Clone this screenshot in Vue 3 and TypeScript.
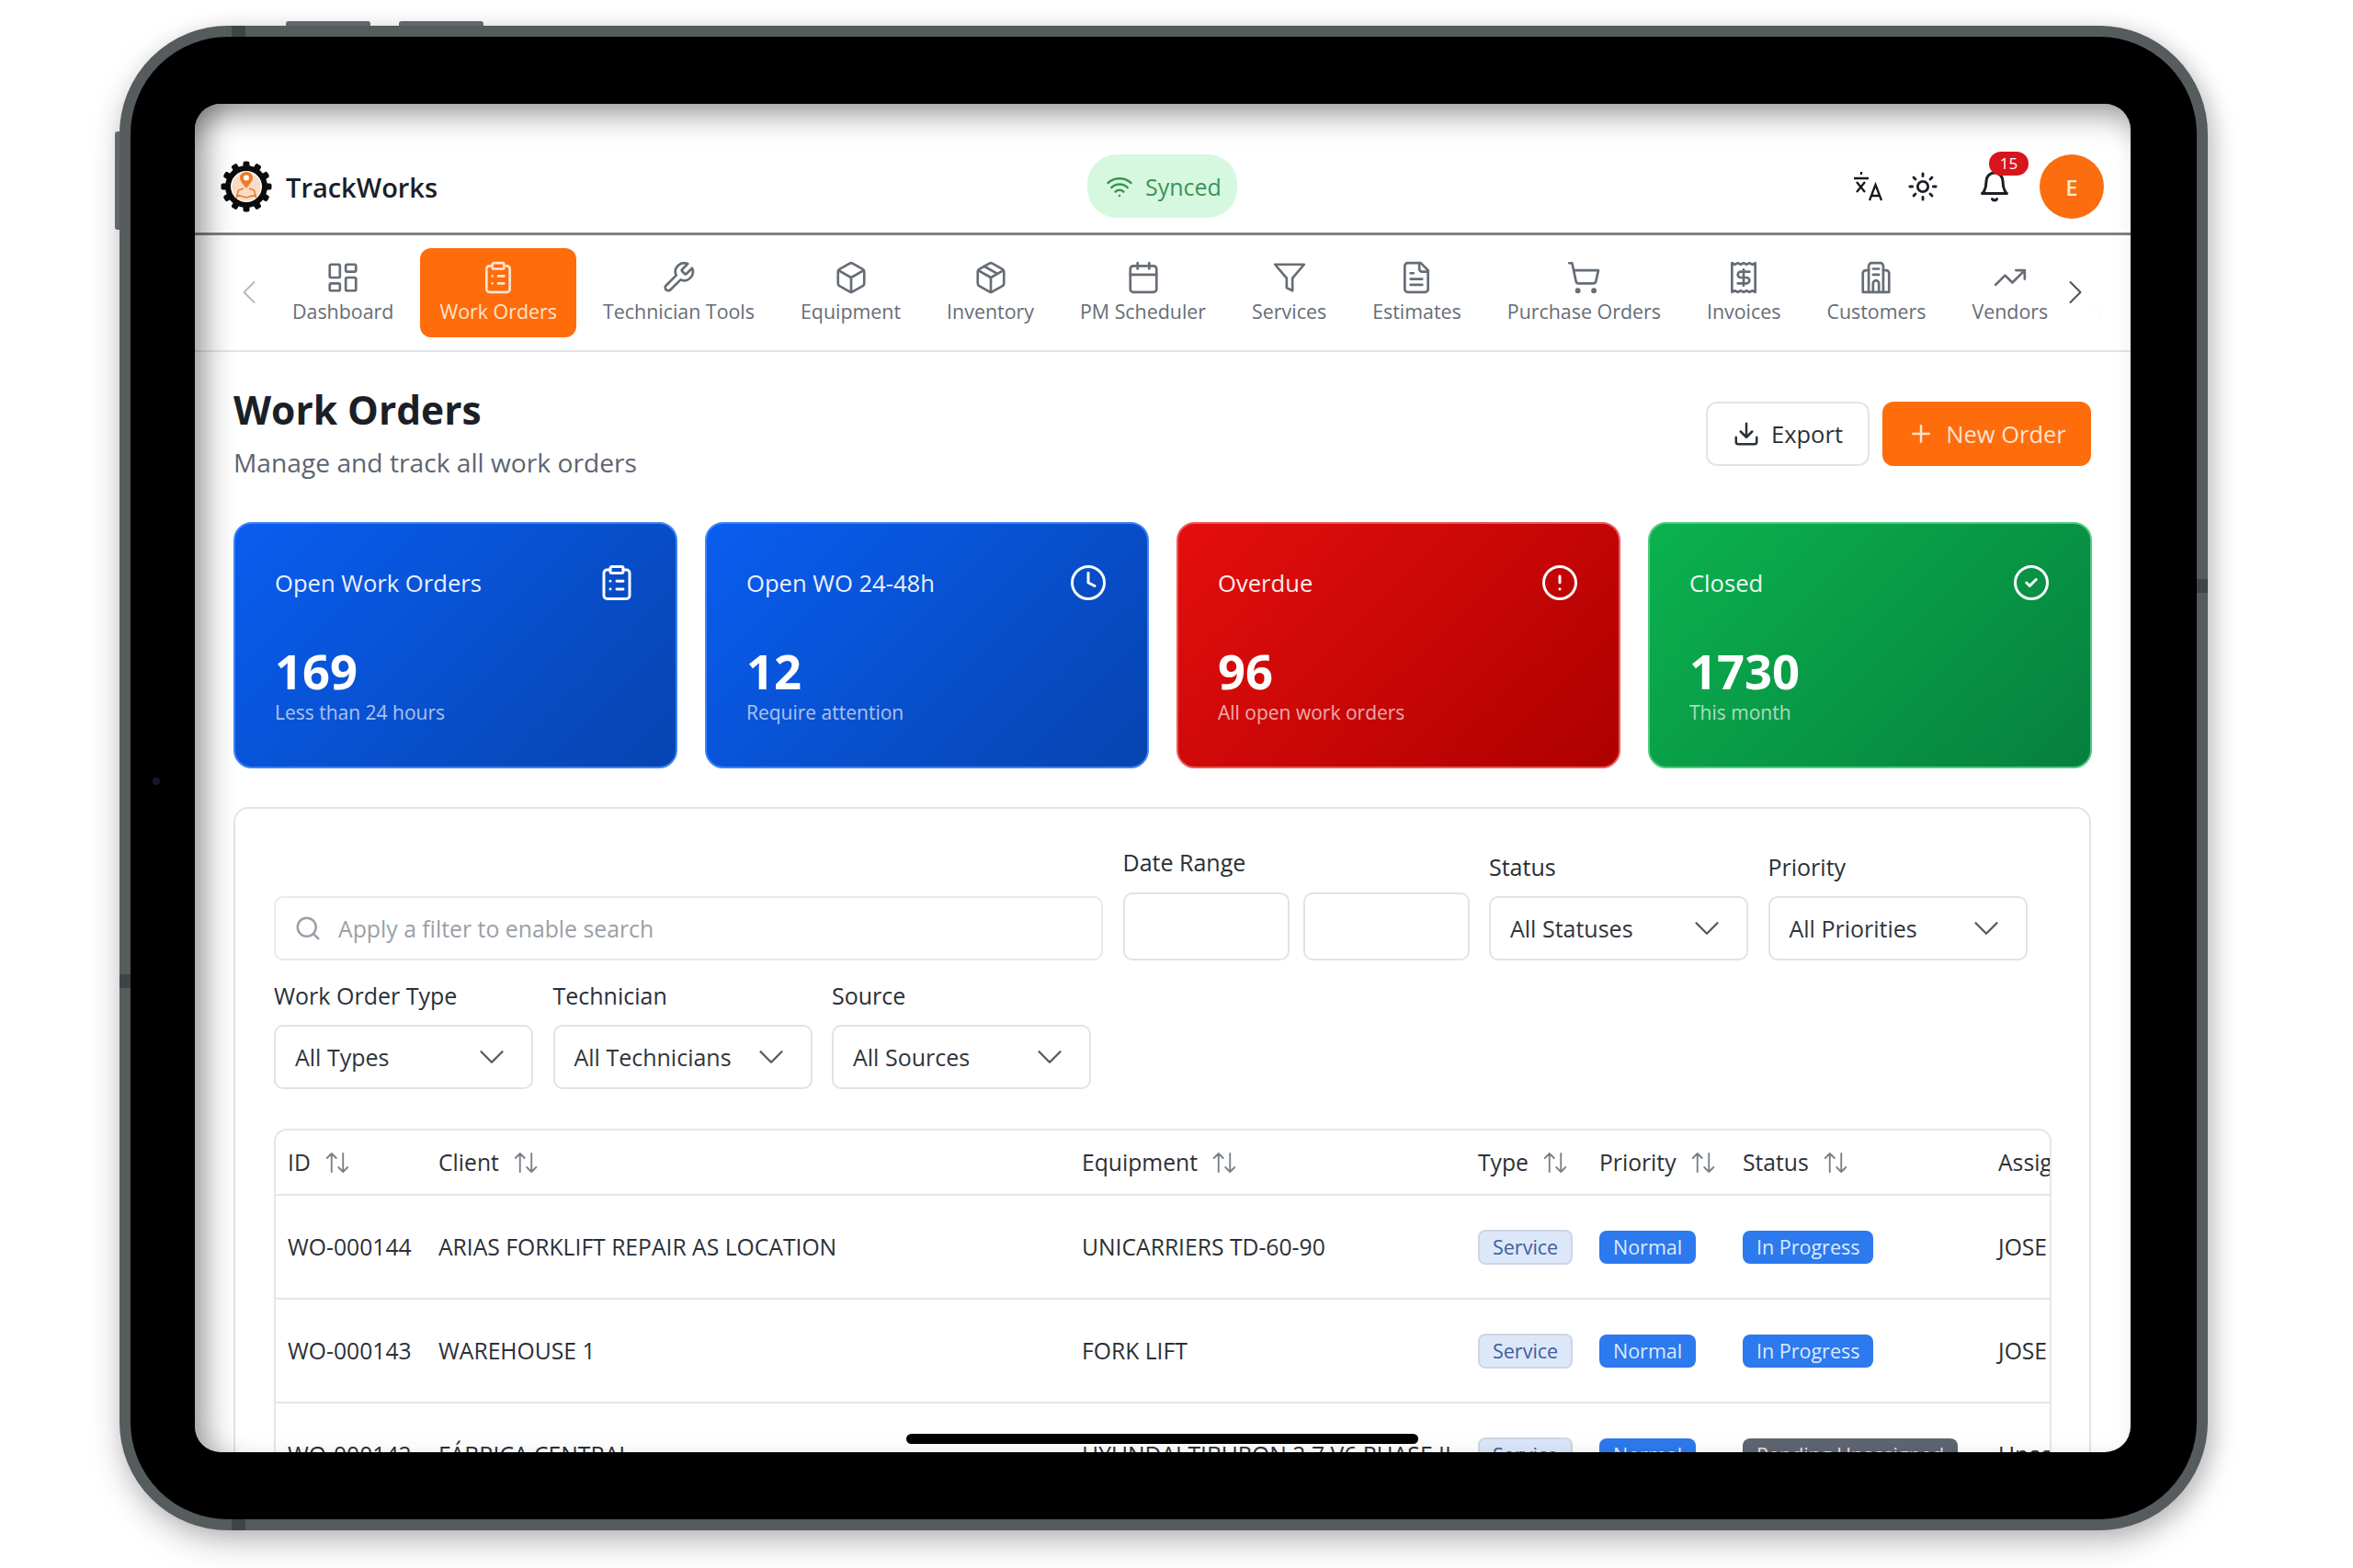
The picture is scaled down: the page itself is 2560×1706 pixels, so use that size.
<template>
  <div class="stage">
    <div class="tablet">
      <span class="side-btn top-a"></span>
      <span class="side-btn top-b"></span>
      <span class="side-btn left-a"></span>
      <span class="tick tick-top"></span>
      <span class="tick tick-bottom"></span>
      <span class="tick tick-left"></span>
      <span class="tick tick-right"></span>
      <span class="camera"></span>

      <div class="screen">
        <header class="topbar">
          <div class="brand">
            <svg class="logo" viewBox="0 0 56 56">
              <g fill="#0b0b0b">
                <rect
                  v-for="deg in teeth"
                  :key="deg"
                  x="24.5"
                  y="0.5"
                  width="7"
                  height="10"
                  rx="2"
                  :transform="`rotate(${deg} 28 28)`"
                />
                <circle cx="28" cy="28" r="23" />
              </g>
              <circle cx="28" cy="28" r="17" fill="#fff" />
              <circle cx="28" cy="28" r="15.500" fill="#f8dcc6" />
              <path d="M28 12c-4.200 0-7 3-7 6.600 0 4 4.600 8.400 7 11.400 2.400-3 7-7.400 7-11.400 0-3.600-2.800-6.600-7-6.600z" fill="#ee7b30" />
              <circle cx="28" cy="18.500" r="3" fill="#fff" />
              <path d="M17 41l2.500-9 5.500-2M39 41l-2.500-9-5.500-2M18 37l10 3 10-3" fill="none" stroke="#ee7b30" stroke-width="1.600" />
            </svg>
            <span class="brand-name">TrackWorks</span>
          </div>

          <div class="synced">
            <svg class="ico synced-ico" viewBox="0 0 24 24" v-html="icons.wifi"></svg>
            <span>Synced</span>
          </div>

          <div class="actions">
            <svg class="lang" viewBox="0 0 34 32">
              <path d="M10 0v3M2 7h16M5 11l9 11M14 11l-9 11M19 31l6.500-17L32 31M21 26h9" />
            </svg>
            <svg class="ico sun" viewBox="0 0 24 24" v-html="icons.sun"></svg>
            <div class="bell">
              <svg class="ico" viewBox="0 0 24 24" v-html="icons.bell"></svg>
              <span class="badge-count">15</span>
            </div>
            <div class="avatar">E</div>
          </div>
        </header>

        <nav class="nav">
          <div class="nav-track">
            <div
              v-for="item in navItems"
              :key="item.label"
              :class="['nav-item', { active: item.label === 'Work Orders' }]"
            >
              <svg class="ico nav-ico" viewBox="0 0 24 24" v-html="icons[item.icon]"></svg>
              <span>{{ item.label }}</span>
            </div>
          </div>
          <span class="nav-fade"></span>
          <svg class="ico nav-prev" viewBox="0 0 24 24"><path d="m15 18-6-6 6-6" /></svg>
          <svg class="ico nav-next" viewBox="0 0 24 24"><path d="m9 18 6-6-6-6" /></svg>
        </nav>

        <main class="page">
          <div class="page-head">
            <div>
              <h1>Work Orders</h1>
              <p>Manage and track all work orders</p>
            </div>
            <div class="head-actions">
              <button class="btn-export">
                <svg class="ico" viewBox="0 0 24 24" v-html="icons.download"></svg>
                Export
              </button>
              <button class="btn-new">
                <svg class="ico" viewBox="0 0 24 24"><path d="M5 12h14M12 5v14" /></svg>
                New Order
              </button>
            </div>
          </div>

          <section class="cards">
            <div v-for="card in cards" :key="card.title" :class="['card', card.tone]">
              <div class="card-top">
                <span class="card-title">{{ card.title }}</span>
                <svg class="ico card-ico" viewBox="0 0 24 24" v-html="icons[card.icon]"></svg>
              </div>
              <div class="card-value">{{ card.value }}</div>
              <div class="card-sub">{{ card.sub }}</div>
            </div>
          </section>

          <section class="panel">
            <div class="filter-row first">
              <div class="search">
                <svg class="ico" viewBox="0 0 24 24" v-html="icons.search"></svg>
                <span>Apply a filter to enable search</span>
              </div>
              <div class="field date-field">
                <label>Date Range</label>
                <div class="dates">
                  <div class="date-box"></div>
                  <div class="date-box"></div>
                </div>
              </div>
              <div v-for="f in topFilters" :key="f.label" class="field">
                <label>{{ f.label }}</label>
                <div class="select">
                  <span>{{ f.value }}</span>
                  <svg class="ico" viewBox="0 0 24 24"><path d="m6 9 6 6 6-6" /></svg>
                </div>
              </div>
            </div>

            <div class="filter-row">
              <div v-for="f in bottomFilters" :key="f.label" class="field">
                <label>{{ f.label }}</label>
                <div class="select">
                  <span>{{ f.value }}</span>
                  <svg class="ico" viewBox="0 0 24 24"><path d="m6 9 6 6 6-6" /></svg>
                </div>
              </div>
            </div>

            <div class="table-wrap">
              <table>
                <colgroup>
                  <col v-for="w in colWidths" :key="w" :style="{ width: w + 'px' }" />
                </colgroup>
                <thead>
                  <tr>
                    <th v-for="col in columns" :key="col">
                      <span class="th-inner">
                        {{ col }}
                        <svg class="ico sort" viewBox="0 0 24 24" v-html="icons.sort"></svg>
                      </span>
                    </th>
                    <th>Assigned</th>
                  </tr>
                </thead>
                <tbody>
                  <tr v-for="row in rows" :key="row.id">
                    <td>{{ row.id }}</td>
                    <td>{{ row.client }}</td>
                    <td>{{ row.equipment }}</td>
                    <td><span class="pill service">Service</span></td>
                    <td><span class="pill normal">Normal</span></td>
                    <td>
                      <span :class="['pill', row.status === 'In Progress' ? 'progress' : 'pending']">{{ row.status }}</span>
                    </td>
                    <td>{{ row.assigned }}</td>
                  </tr>
                </tbody>
              </table>
            </div>
          </section>
        </main>

        <span class="home-bar"></span>
        <span class="screen-shade"></span>
      </div>
    </div>
  </div>
</template>

<script setup lang="ts">
const icons: Record<string, string> = {
  dashboard:
    '<rect x="3" y="3" width="7" height="9" rx="1"/><rect x="14" y="3" width="7" height="5" rx="1"/><rect x="14" y="12" width="7" height="9" rx="1"/><rect x="3" y="16" width="7" height="5" rx="1"/>',
  clipboard:
    '<rect x="8" y="2" width="8" height="4" rx="1"/><path d="M16 4h2a2 2 0 0 1 2 2v14a2 2 0 0 1-2 2H6a2 2 0 0 1-2-2V6a2 2 0 0 1 2-2h2"/><path d="M12 11h4M12 16h4M8 11h.01M8 16h.01"/>',
  wrench:
    '<path d="M14.7 6.300a1 1 0 0 0 0 1.400l1.600 1.600a1 1 0 0 0 1.400 0l3.770-3.770a6 6 0 0 1-7.940 7.940l-6.910 6.910a2.120 2.120 0 0 1-3-3l6.910-6.910a6 6 0 0 1 7.940-7.940l-3.760 3.760z"/>',
  box:
    '<path d="M21 8a2 2 0 0 0-1-1.730l-7-4a2 2 0 0 0-2 0l-7 4A2 2 0 0 0 3 8v8a2 2 0 0 0 1 1.730l7 4a2 2 0 0 0 2 0l7-4A2 2 0 0 0 21 16Z"/><path d="m3.300 7 8.700 5 8.700-5M12 22V12"/>',
  pkg:
    '<path d="M21 8a2 2 0 0 0-1-1.730l-7-4a2 2 0 0 0-2 0l-7 4A2 2 0 0 0 3 8v8a2 2 0 0 0 1 1.730l7 4a2 2 0 0 0 2 0l7-4A2 2 0 0 0 21 16Z"/><path d="m3.300 7 8.700 5 8.700-5M12 22V12M7.500 4.270l9 5.150"/>',
  calendar:
    '<path d="M8 2v4M16 2v4M3 10h18"/><rect x="3" y="4" width="18" height="18" rx="2"/>',
  funnel: '<polygon points="22 3 2 3 10 12.460 10 19 14 21 14 12.460 22 3"/>',
  file:
    '<path d="M15 2H6a2 2 0 0 0-2 2v16a2 2 0 0 0 2 2h12a2 2 0 0 0 2-2V7Z"/><path d="M14 2v4a2 2 0 0 0 2 2h4M10 9H8M16 13H8M16 17H8"/>',
  cart:
    '<circle cx="8" cy="21" r="1"/><circle cx="19" cy="21" r="1"/><path d="M2.050 2.050h2l2.660 12.420a2 2 0 0 0 2 1.580h9.780a2 2 0 0 0 1.950-1.570l1.650-7.430H5.120"/>',
  receipt:
    '<path d="M4 2v20l2-1 2 1 2-1 2 1 2-1 2 1 2-1 2 1V2l-2 1-2-1-2 1-2-1-2 1-2-1-2 1Z"/><path d="M16 8h-6a2 2 0 1 0 0 4h4a2 2 0 1 1 0 4H8M12 17.500v-11"/>',
  building:
    '<path d="M3 22V9a2 2 0 0 1 2-2h2V4a2 2 0 0 1 2-2h6a2 2 0 0 1 2 2v3h2a2 2 0 0 1 2 2v13Z"/><path d="M7 7v15M17 7v15M10 6h4M10 10h4M10 22v-6a2 2 0 0 1 4 0v6"/>',
  trend: '<path d="M22 7l-8.500 8.500-5-5L2 17M16 7h6v6"/>',
  team: '<circle cx="12" cy="8" r="4"/><path d="M4 21a8 8 0 0 1 16 0"/>',
  wifi:
    '<path d="M12 20h.01M2 8.820a15 15 0 0 1 20 0M5 12.860a10 10 0 0 1 14 0M8.500 16.430a5 5 0 0 1 7 0"/>',
  sun:
    '<circle cx="12" cy="12" r="4"/><path d="M12 2v2M12 20v2M4.930 4.930l1.410 1.410M17.660 17.660l1.410 1.410M2 12h2M20 12h2M6.340 17.660l-1.410 1.410M19.070 4.930l-1.410 1.410"/>',
  bell:
    '<path d="M6 8a6 6 0 0 1 12 0c0 7 3 9 3 9H3s3-2 3-9"/><path d="M10.300 21a1.940 1.940 0 0 0 3.400 0"/>',
  download:
    '<path d="M21 15v4a2 2 0 0 1-2 2H5a2 2 0 0 1-2-2v-4M7 10l5 5 5-5M12 15V3"/>',
  clock: '<circle cx="12" cy="12" r="10"/><path d="M12 6v6l4 2"/>',
  alert: '<circle cx="12" cy="12" r="10"/><path d="M12 8v4M12 16h.01"/>',
  check: '<circle cx="12" cy="12" r="10"/><path d="m9 12 2 2 4-4"/>',
  search: '<circle cx="11" cy="11" r="8"/><path d="m21 21-4.300-4.300"/>',
  sort: '<path d="m21 16-4 4-4-4M17 20V4M3 8l4-4 4 4M7 4v16"/>',
};

const teeth = [0, 30, 60, 90, 120, 150, 180, 210, 240, 270, 300, 330];

const navItems = [
  { label: "Dashboard", icon: "dashboard" },
  { label: "Work Orders", icon: "clipboard" },
  { label: "Technician Tools", icon: "wrench" },
  { label: "Equipment", icon: "box" },
  { label: "Inventory", icon: "pkg" },
  { label: "PM Scheduler", icon: "calendar" },
  { label: "Services", icon: "funnel" },
  { label: "Estimates", icon: "file" },
  { label: "Purchase Orders", icon: "cart" },
  { label: "Invoices", icon: "receipt" },
  { label: "Customers", icon: "building" },
  { label: "Vendors", icon: "trend" },
  { label: "Team", icon: "team" },
];

const cards = [
  { title: "Open Work Orders", value: "169", sub: "Less than 24 hours", icon: "clipboard", tone: "blue" },
  { title: "Open WO 24-48h", value: "12", sub: "Require attention", icon: "clock", tone: "blue" },
  { title: "Overdue", value: "96", sub: "All open work orders", icon: "alert", tone: "red" },
  { title: "Closed", value: "1730", sub: "This month", icon: "check", tone: "green" },
];

const topFilters = [
  { label: "Status", value: "All Statuses" },
  { label: "Priority", value: "All Priorities" },
];

const bottomFilters = [
  { label: "Work Order Type", value: "All Types" },
  { label: "Technician", value: "All Technicians" },
  { label: "Source", value: "All Sources" },
];

const columns = ["ID", "Client", "Equipment", "Type", "Priority", "Status"];
const colWidths = [164, 700, 431, 132, 156, 278, 200];

const rows = [
  { id: "WO-000144", client: "ARIAS FORKLIFT REPAIR AS LOCATION", equipment: "UNICARRIERS TD-60-90", status: "In Progress", assigned: "JOSE" },
  { id: "WO-000143", client: "WAREHOUSE 1", equipment: "FORK LIFT", status: "In Progress", assigned: "JOSE" },
  { id: "WO-000142", client: "FÁBRICA CENTRAL", equipment: "HYUNDAI TIBURON 2.7 V6 PHASE II", status: "Pending Unassigned", assigned: "Unassigned" },
];
</script>

<style>
body {
  background: #fff;
}
</style>

<style scoped>
.stage {
  width: 2560px;
  height: 1706px;
  padding: 28px 0 0 130px;
  box-sizing: border-box;
  background: #fff;
  overflow: hidden;
  font-family: "Open Sans", "Liberation Sans", sans-serif;
}

.tablet {
  position: relative;
  width: 2272px;
  height: 1637px;
  box-sizing: border-box;
  padding: 73px 72px 73px 70px;
  background: #000;
  border: 12px solid #565b5e;
  border-radius: 118px;
  box-shadow: 0 14px 34px rgba(0, 0, 0, 0.22), 8px 4px 22px rgba(0, 0, 0, 0.12);
}

.side-btn {
  position: absolute;
  background: #62676a;
}
.top-a,
.top-b {
  top: -17px;
  height: 5px;
  width: 92px;
  border-radius: 3px 3px 0 0;
}
.top-a {
  left: 169px;
}
.top-b {
  left: 292px;
}
.left-a {
  left: -17px;
  top: 103px;
  width: 5px;
  height: 107px;
  border-radius: 3px 0 0 3px;
}

.tick {
  position: absolute;
  background: #3f4447;
}
.tick-top,
.tick-bottom {
  left: 110px;
  width: 15px;
  height: 12px;
}
.tick-top {
  top: -12px;
}
.tick-bottom {
  bottom: -12px;
}
.tick-left,
.tick-right {
  width: 12px;
  height: 15px;
}
.tick-left {
  left: -12px;
  top: 1020px;
}
.tick-right {
  right: -12px;
  top: 590px;
}

.camera {
  position: absolute;
  left: 24px;
  top: 806px;
  width: 8px;
  height: 8px;
  border-radius: 50%;
  background: #141a2c;
}

.screen {
  position: relative;
  height: 100%;
  background: #fff;
  border-radius: 28px;
  overflow: hidden;
  color: #1f2937;
}

.screen-shade {
  position: absolute;
  inset: 0;
  border-radius: 28px;
  pointer-events: none;
  box-shadow: inset 30px 0 30px -16px rgba(0, 0, 0, 0.34), inset 0 30px 30px -16px rgba(0, 0, 0, 0.34);
}

.home-bar {
  position: absolute;
  left: 774px;
  bottom: 9px;
  width: 557px;
  height: 11px;
  border-radius: 6px;
  background: #000;
}

.ico {
  fill: none;
  stroke: currentColor;
  stroke-width: 2;
  stroke-linecap: round;
  stroke-linejoin: round;
}

/* top bar */
.topbar {
  height: 143px;
  box-sizing: border-box;
  position: relative;
  display: flex;
  align-items: center;
  justify-content: space-between;
  padding: 40px 29px 0 28px;
  border-bottom: 3px solid #7d8184;
}
.brand {
  display: flex;
  align-items: center;
  gap: 15px;
}
.logo {
  width: 56px;
  height: 56px;
}
.brand-name {
  font-size: 29px;
  font-weight: 600;
  color: #1b2027;
}
.synced {
  position: absolute;
  left: 971px;
  top: 55px;
  width: 163px;
  height: 69px;
  box-sizing: border-box;
  padding-left: 20px;
  display: flex;
  align-items: center;
  gap: 13px;
  border-radius: 32px;
  background: #d6f8de;
  color: #3b9358;
  font-size: 25px;
}
.synced-ico {
  width: 30px;
  height: 30px;
}
.actions {
  display: flex;
  align-items: center;
}
.lang {
  width: 34px;
  height: 32px;
  fill: none;
  stroke: #14181d;
  stroke-width: 2.300;
  margin-right: 26px;
}
.sun {
  width: 34px;
  height: 34px;
  color: #1c2026;
  margin-right: 43px;
}
.bell {
  position: relative;
  width: 36px;
  height: 36px;
  color: #1c2026;
  margin-right: 31px;
}
.bell svg {
  width: 36px;
  height: 36px;
}
.badge-count {
  position: absolute;
  left: 12px;
  top: -20px;
  width: 43px;
  height: 26px;
  line-height: 26px;
  border-radius: 13px;
  background: #d8151d;
  color: #fff;
  font-size: 17px;
  text-align: center;
}
.avatar {
  width: 70px;
  height: 70px;
  border-radius: 50%;
  background: #fb6d0f;
  color: #fde5d2;
  font-size: 24px;
  font-weight: 600;
  display: flex;
  align-items: center;
  justify-content: center;
}

/* nav */
.nav {
  position: relative;
  height: 127px;
  box-sizing: border-box;
  padding-top: 14px;
  border-bottom: 2px solid #e3e5e8;
  overflow: hidden;
}
.nav-track {
  display: flex;
  gap: 8px;
  padding-left: 85px;
  width: max-content;
}
.nav-item {
  height: 97px;
  box-sizing: border-box;
  padding: 13px 21px 0;
  display: flex;
  flex-direction: column;
  align-items: center;
  gap: 3px;
  border-radius: 12px;
  color: #666d76;
  font-size: 21.400px;
  white-space: nowrap;
}
.nav-item.active {
  background: #ff6c0c;
  color: #fde3cf;
}
.nav-ico {
  width: 38px;
  height: 38px;
  stroke-width: 1.700;
}
.nav-fade {
  position: absolute;
  right: 0;
  top: 0;
  bottom: 0;
  width: 62px;
  background: linear-gradient(to right, rgba(255, 255, 255, 0.8), #fff 50%);
}
.nav-prev,
.nav-next {
  position: absolute;
  top: 40px;
  width: 44px;
  height: 44px;
  stroke-width: 1.100;
}
.nav-prev {
  left: 37px;
  color: #b6b9bd;
}
.nav-next {
  left: 2024px;
  color: #4b5159;
}

/* page */
.page {
  padding: 0 43px 0 42px;
}
.page-head {
  display: flex;
  justify-content: space-between;
  align-items: flex-start;
  padding-top: 41px;
  height: 185px;
  box-sizing: border-box;
}
h1 {
  margin: 0;
  font-size: 42.500px;
  line-height: 44px;
  font-weight: 700;
  color: #1b2027;
}
.page-head p {
  margin: 17px 0 0;
  font-size: 28.200px;
  line-height: 36px;
  color: #5c6570;
}
.head-actions {
  display: flex;
  gap: 14px;
  margin-top: 13px;
}
button {
  height: 70px;
  display: flex;
  align-items: center;
  justify-content: center;
  gap: 12px;
  border-radius: 12px;
  font-family: inherit;
  font-size: 25.500px;
  box-sizing: border-box;
}
button svg {
  width: 30px;
  height: 30px;
}
.btn-export {
  width: 178px;
  background: #fff;
  border: 2px solid #e1e4e8;
  color: #2b3037;
}
.btn-new {
  width: 227px;
  background: #ff6c0c;
  border: 0;
  color: #fde3cf;
}

.cards {
  display: grid;
  grid-template-columns: repeat(4, 483px);
  gap: 30px;
}
.card {
  height: 268px;
  box-sizing: border-box;
  padding: 44px 43px 0;
  border-radius: 20px;
  color: #fff;
}
.card.blue {
  background: linear-gradient(135deg, #0a5df0, #0644b0);
  border: 2px solid #3c84f5;
}
.card.red {
  background: linear-gradient(135deg, #e50e0e, #ae0000);
  border: 2px solid #e85a5a;
}
.card.green {
  background: linear-gradient(135deg, #0bb24f, #06803e);
  border: 2px solid #4fcb80;
}
.card-top {
  display: flex;
  align-items: center;
  justify-content: space-between;
  height: 40px;
}
.card-title {
  font-size: 25.600px;
  opacity: 0.92;
}
.card-ico {
  width: 42px;
  height: 42px;
  stroke-width: 1.700;
}
.card-value {
  margin-top: 50px;
  font-size: 52.500px;
  line-height: 52px;
  font-weight: 700;
}
.card-sub {
  margin-top: 4px;
  font-size: 21px;
  line-height: 30px;
  opacity: 0.65;
}

/* filters */
.panel {
  margin-top: 42px;
  padding: 42px 42px 0;
  border: 2px solid #e2e4e7;
  border-radius: 16px;
  height: 900px;
  box-sizing: border-box;
}
.filter-row {
  display: flex;
  align-items: flex-end;
  gap: 21.500px;
  margin-top: 22px;
}
.filter-row.first {
  margin-top: 0;
}
.search {
  width: 902px;
  height: 70px;
  box-sizing: border-box;
  display: flex;
  align-items: center;
  gap: 18px;
  padding-left: 20px;
  border: 2px solid #e8eaed;
  border-radius: 10px;
  color: #9aa0a8;
  font-size: 24.800px;
}
.search svg {
  width: 30px;
  height: 30px;
}
.field {
  display: flex;
  flex-direction: column;
  gap: 16px;
}
.field label {
  font-size: 25px;
  font-weight: 500;
  line-height: 32px;
  color: #2a2f36;
}
.select {
  width: 282px;
  height: 70px;
  box-sizing: border-box;
  display: flex;
  align-items: center;
  justify-content: space-between;
  padding: 0 20px 0 21px;
  border: 2px solid #e0e3e7;
  border-radius: 10px;
  font-size: 25px;
  color: #2f353c;
}
.select svg {
  width: 46px;
  height: 46px;
  color: #555b63;
  stroke-width: 1.200;
}
.date-field {
  gap: 17px;
}
.dates {
  display: flex;
  gap: 15px;
}
.date-box {
  width: 181px;
  height: 74px;
  box-sizing: border-box;
  border: 2px solid #e0e3e7;
  border-radius: 10px;
}

.table-wrap {
  margin-top: 43px;
  width: 1930px;
  border: 2px solid #e4e6e9;
  border-bottom: 0;
  border-radius: 14px 14px 0 0;
  overflow: hidden;
}
table {
  border-collapse: collapse;
  table-layout: fixed;
  width: 2061px;
  font-size: 24.700px;
  color: #2b3037;
}
th,
td {
  padding: 0 0 0 13px;
  text-align: left;
  white-space: nowrap;
  border-bottom: 2px solid #e4e6e9;
  overflow: hidden;
}
th {
  height: 69px;
  font-weight: 500;
}
td {
  height: 111px;
}
.th-inner {
  display: inline-flex;
  align-items: center;
  gap: 14px;
}
.sort {
  width: 30px;
  height: 30px;
  color: #7a8088;
  stroke-width: 1.500;
}
.pill {
  display: inline-block;
  height: 36px;
  line-height: 36px;
  padding: 0 15px;
  border-radius: 8px;
  font-size: 21.500px;
}
.pill.service {
  background: #dce8f9;
  border: 2px solid #cdd6e2;
  color: #3e5c9c;
  height: 34px;
  line-height: 34px;
  padding: 0 14px;
}
.pill.normal,
.pill.progress {
  background: #2d79ee;
  color: #dceafe;
}
.pill.pending {
  background: #5f6672;
  color: #dfe2e6;
}
</style>
